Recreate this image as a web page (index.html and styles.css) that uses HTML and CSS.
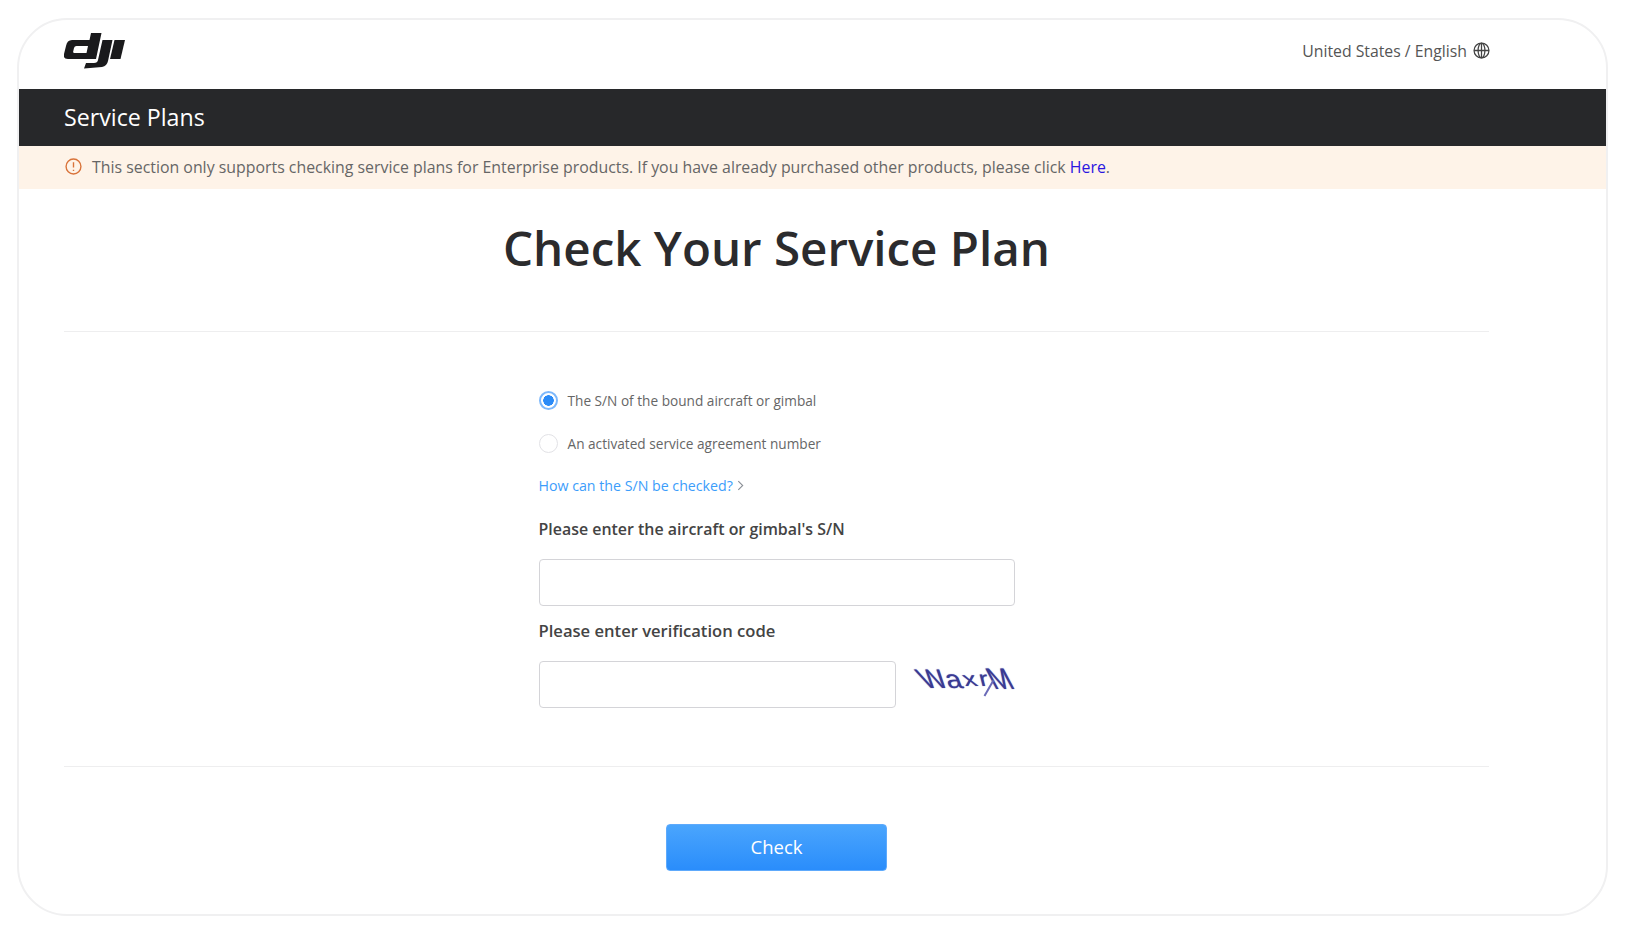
FILE: index.html
```html
<!DOCTYPE html>
<html lang="en">
<head>
    <meta charset="UTF-8">
    <title>Check Your Service Plan</title>
    <link rel="stylesheet" href="styles.css">
</head>
<body>
    <div class="frame">
        <header class="topbar">
            <svg class="logo" viewBox="0 0 62 36" aria-label="DJI">
                <path fill-rule="evenodd" d="M8 7H25.500L27 0H37.500L32 26H4Q-1 26 0 21L2 13Q3 7 8 7ZM12.500 13Q10.500 13 10 15L9.200 18.500Q8.800 20 10.500 20H22.500L24 13Z"/>
                <path d="M38.500 7H48.500L44 28Q43 33 38 34L20 35.500 22 30H30Q33.500 30 34 27Z"/>
                <path d="M50.500 7H61L56.500 26H46Z"/>
            </svg>
            <div class="locale">
                <span>United States / English</span>
                <svg class="globe" viewBox="0 0 16 16">
                    <circle cx="8" cy="8" r="7"/>
                    <ellipse cx="8" cy="8" rx="3.200" ry="7"/>
                    <path d="M1 8h14M8 1v14"/>
                </svg>
            </div>
        </header>
        <div class="titlebar">Service Plans</div>
        <div class="notice">
            <svg class="notice-icon" viewBox="0 0 16 16">
                <circle cx="8" cy="8" r="7"/>
                <path d="M8 4v5M8 11v1.200"/>
            </svg>
            <span>This section only supports checking service plans for Enterprise products. If you have already purchased other products, please click <a href="#">Here</a>.</span>
        </div>

        <main class="content">
            <h1>Check Your Service Plan</h1>
            <form class="check-form">
                <div class="radio-row">
                    <span class="radio checked"></span>
                    <span>The S/N of the bound aircraft or gimbal</span>
                </div>
                <div class="radio-row">
                    <span class="radio"></span>
                    <span>An activated service agreement number</span>
                </div>
                <a class="help-link" href="#">How can the S/N be checked?
                    <svg class="chevron" viewBox="0 0 6 10"><path d="M1 1l4 4-4 4"/></svg>
                </a>
                <label class="field-label">Please enter the aircraft or gimbal's S/N</label>
                <input class="text-input" type="text">
                <label class="field-label second">Please enter verification code</label>
                <div class="captcha-row">
                    <input class="text-input" type="text">
                    <div class="captcha">
                        <span class="c1">W</span><span class="c2">a</span><span class="c3">x</span><span class="c4">r</span><span class="c5">M</span>
                    </div>
                </div>
            </form>
            <div class="actions">
                <button type="button">Check</button>
            </div>
        </main>
    </div>
</body>
</html>
```

FILE: styles.css
```css
body {
    margin: 0;
    height: 938px;
    background-color: #fff;
    font-family: "Open Sans", sans-serif;
    color: #555;
    overflow: hidden;
}

.frame {
    width: 1591px;
    height: 898px;
    margin: 18px 0 0 17px;
    border: 2px solid #f0f0f1;
    border-radius: 50px;
    overflow: hidden;
    box-sizing: border-box;
}

.topbar {
    height: 69px;
    display: flex;
    align-items: center;
    justify-content: space-between;
    padding: 0 116px 8px 45px;
    box-sizing: border-box;
}

.logo {
    width: 62px;
    height: 36px;
    fill: #1a1a1c;
}

.locale {
    display: flex;
    align-items: center;
    gap: 6px;
    font-size: 15.800px;
    color: #555;
}

.globe {
    width: 17px;
    height: 17px;
    fill: none;
    stroke: #444;
    stroke-width: 1.200;
}

.titlebar {
    height: 57px;
    line-height: 57px;
    padding-left: 45px;
    background-color: #27282a;
    color: #fff;
    font-size: 23.200px;
    font-weight: 500;
}

.notice {
    height: 43px;
    display: flex;
    align-items: center;
    gap: 10px;
    padding: 0 0 2px 46px;
    background-color: #fef3e8;
    font-size: 15.880px;
    color: #666;
    box-sizing: border-box;
}

.notice a {
    color: #2a16e0;
    text-decoration: none;
}

.notice-icon {
    width: 17px;
    height: 17px;
    fill: none;
    stroke: #d9733a;
    stroke-width: 1.300;
}

.content {
    margin: 0 117px 0 45px;
}

h1 {
    margin: 0;
    height: 143px;
    padding-top: 26px;
    box-sizing: border-box;
    border-bottom: 1px solid #eeeeef;
    text-align: center;
    font-size: 47.500px;
    line-height: 66px;
    font-weight: 600;
    color: #2b2b2d;
}

.check-form {
    width: 476px;
    margin: 0 auto;
    padding: 47px 0 58px;
    display: flex;
    flex-direction: column;
}

.radio-row {
    height: 43px;
    display: flex;
    align-items: center;
    gap: 10px;
    font-size: 13.650px;
    color: #666;
}

.radio {
    width: 19px;
    height: 19px;
    border: 1px solid #e2e2e6;
    border-radius: 50%;
    box-sizing: border-box;
}

.radio.checked {
    border: 2px solid #7db8fb;
    background: radial-gradient(circle, #2b8bf7 5px, #fff 5.500px);
}

.help-link {
    height: 43px;
    display: flex;
    align-items: center;
    gap: 4px;
    padding-bottom: 2px;
    box-sizing: border-box;
    font-size: 14.200px;
    color: #3c9dfb;
    text-decoration: none;
}

.chevron {
    width: 7px;
    height: 11px;
    fill: none;
    stroke: #8a8f96;
}

.field-label {
    height: 43px;
    line-height: 43px;
    font-size: 15.950px;
    font-weight: 600;
    color: #444;
}

.field-label.second {
    margin-top: 2px;
    height: 53px;
    line-height: 46px;
    font-size: 16.600px;
}

.text-input {
    display: block;
    width: 100%;
    height: 47px;
    border: 1px solid #d4d4d8;
    border-radius: 4px;
    box-sizing: border-box;
    background: #fff;
}

.field-label + .text-input {
    margin-top: 8px;
}

.captcha-row {
    display: flex;
    align-items: flex-start;
    gap: 18px;
}

.captcha-row .text-input {
    width: 357px;
    flex: none;
}

.captcha {
    position: relative;
    width: 102px;
    height: 36px;
    display: flex;
    align-items: center;
    font-family: "Liberation Sans", sans-serif;
    font-size: 27px;
    line-height: 1;
    color: #3a3a92;
    text-shadow: 0 0 1px #6a6ab8;
}

.captcha span {
    display: block;
}

/* tail that runs off the last captcha letter */
.captcha::after {
    content: "";
    position: absolute;
    left: 74px;
    top: 18px;
    width: 1.500px;
    height: 18px;
    background-color: #6a6ab8;
    transform: rotate(30deg);
}

.c1 { transform: skewX(32deg); margin: 0 1px 0 6px; }
.c2 { transform: skewX(20deg) scale(1.050, .95); margin-right: 2px; }
.c3 { transform: skewX(20deg) scaleY(.75); margin-right: 2px; }
.c4 { transform: skewX(14deg) scaleY(.8); margin-right: 1px; }
.c5 { transform: skewX(28deg) scale(1, 1.100); }

.actions {
    border-top: 1px solid #eeeeef;
    padding-top: 57px;
    text-align: center;
}

button {
    width: 221px;
    height: 47px;
    padding: 0 0 2px;
    border: 1px solid #5eaafc;
    border-radius: 4px;
    background: linear-gradient(#4aa5fd, #2a8dfb);
    color: #fff;
    font-family: inherit;
    font-size: 18.500px;
}
```
